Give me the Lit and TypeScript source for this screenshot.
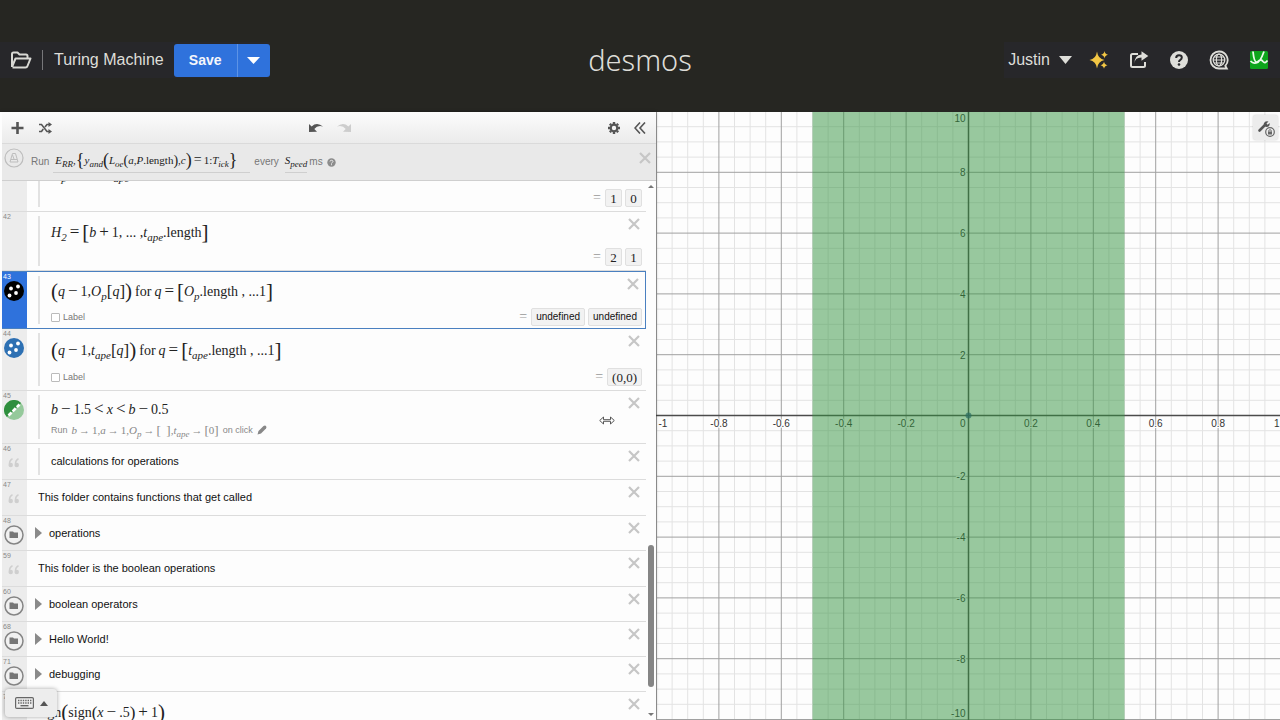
import { LitElement, html, css, svg, nothing, TemplateResult } from "lit";
import { customElement, property } from "lit/decorators.js";
import { classMap } from "lit/directives/class-map.js";

type Part = TemplateResult;

// Small vocabulary for typesetting expressions.
const v = (s: string): Part => html`<i>${s}</i>`;
const n = (s: string): Part => html`<span>${s}</span>`;
const sub = (s: string): Part => html`<sub>${s}</sub>`;
const op = (s: string): Part => html`<span class="op">${s}</span>`;
const word = (s: string): Part => html`<span class="word">${s}</span>`;
const fence = (s: string): Part => html`<span class="fence">${s}</span>`;
const tall = (s: string): Part => html`<span class="tall">${s}</span>`;

const mathStyles = css`
  .math {
    display: inline-flex;
    align-items: baseline;
    font: 14px/20px "Liberation Serif", serif;
    color: #222;
    white-space: pre;
  }
  .math sub {
    font-size: 11px;
    line-height: 0;
    font-style: italic;
    position: relative;
    vertical-align: baseline;
    top: 4px;
  }
  .math .op {
    font-size: 17px;
    line-height: 0;
    margin: 0 3px;
  }
  .math .word {
    margin: 0 3px;
  }
  .math .fence,
  .math .tall {
    position: relative;
    line-height: 0;
  }
  .math .fence {
    font-size: 17px;
    top: 1px;
  }
  .math .tall {
    font-size: 21px;
    top: 2px;
  }
  .math.small {
    font-size: 11px;
  }
  .math.small sub {
    font-size: 9px;
    top: 3px;
  }
  .math.small .op {
    font-size: 14px;
    margin: 0 2px;
  }
  .math.small .fence {
    font-size: 14px;
  }
  .math.small .tall {
    font-size: 18px;
  }
  .math.action {
    font-size: 11px;
    line-height: 14px;
    color: #888;
  }
  .math.action sub {
    font-size: 9px;
    top: 3px;
  }
  .math.action .op {
    font-size: 11px;
    margin: 0 2px;
  }
  .math.action .fence {
    font-size: 13px;
  }
`;

const resetStyles = css`
  button {
    border: 0;
    padding: 0;
    margin: 0;
    background: none;
    font: inherit;
    color: inherit;
    display: inline-flex;
    align-items: center;
    justify-content: center;
    cursor: pointer;
  }
  svg {
    display: block;
  }
`;

const crossIcon = html`<svg width="12" height="12" viewBox="0 0 12 12">
  <path d="M1 1 11 11M11 1 1 11" stroke="#c6c6c6" stroke-width="2.2" />
</svg>`;

@customElement("calc-header")
export class CalcHeader extends LitElement {
  static styles = [
    resetStyles,
    css`
      :host {
        display: grid;
        grid-template-columns: 1fr auto 1fr;
        align-items: center;
        height: 112px;
        padding-top: 8px;
        box-sizing: border-box;
        background: #262622;
        color: #deded9;
        font: 16px/20px "Liberation Sans", Arial, sans-serif;
      }
      .left,
      .right {
        display: flex;
        align-items: center;
        height: 36px;
      }
      .left {
        justify-self: start;
        background: #27272a;
        padding-left: 10px;
      }
      .bar {
        width: 1px;
        height: 20px;
        background: #77777a;
        margin: 0 11px 0 10px;
      }
      .save {
        display: flex;
        height: 33px;
        margin-left: 10px;
        border-radius: 3px;
        background: #2f72dc;
        color: #f4f6fb;
        font-size: 14px;
        font-weight: bold;
        overflow: hidden;
      }
      .save .main {
        width: 63px;
      }
      .save .more {
        width: 33px;
        border-left: 1px solid #5d93e6;
      }
      .brand {
        font: 300 29px/36px "Noto Sans", "Open Sans", sans-serif;
        color: #deddd8;
      }
      .right {
        justify-self: end;
        background: #27272a;
        padding: 0 11px 0 4px;
      }
      .user {
        gap: 9px;
        margin-right: 17px;
      }
      .icons {
        display: flex;
        gap: 20px;
      }
    `,
  ];

  render() {
    return html`
      <div class="left">
        <button aria-label="Open graph">
          <svg width="22" height="18" viewBox="0 0 22 18" fill="none" stroke="#d9d9d4" stroke-width="2" stroke-linejoin="round">
            <path d="M2 16V3Q2 1.500 3.500 1.500H7.500L9.500 3.500H16Q17.500 3.500 17.500 5V7M2 16 5.500 7.500H20.500L17.500 15Q17 16.500 15.500 16.500H2.500" />
          </svg>
        </button>
        <span class="bar"></span>
        <span>Turing Machine</span>
        <div class="save">
          <button class="main">Save</button>
          <button class="more" aria-label="Save options">
            <svg width="13" height="7" viewBox="0 0 13 7"><path d="M0 0H13L6.500 7Z" fill="#fff" /></svg>
          </button>
        </div>
      </div>
      <div class="brand">desmos</div>
      <div class="right">
        <button class="user">
          Justin
          <svg width="13" height="8" viewBox="0 0 13 8"><path d="M0 0H13L6.500 8Z" fill="#deded9" /></svg>
        </button>
        <div class="icons">
          <button aria-label="What's new">
            <svg width="20" height="20" viewBox="0 0 20 20" fill="#f2c644">
              <path d="M8 1.500Q9 9 15.500 10Q9 11 8 18.500Q7 11 .500 10Q7 9 8 1.500Z" />
              <path d="M15.500 1Q16 4.200 19 4.700Q16 5.200 15.500 8.400Q15 5.200 12 4.700Q15 4.200 15.500 1Z" />
              <path d="M15 11.600Q15.500 14.700 18.500 15.200Q15.500 15.700 15 18.800Q14.500 15.700 11.500 15.200Q14.500 14.700 15 11.600Z" />
            </svg>
          </button>
          <button aria-label="Share">
            <svg width="20" height="20" viewBox="0 0 20 20" fill="none" stroke="#deded9" stroke-width="2">
              <path d="M9 4H3.500Q2 4 2 5.500V15.500Q2 17 3.500 17H14.500Q16 17 16 15.500V12" />
              <path d="M5.500 13.500Q5.500 7.500 12.500 7.500V10.800L19.300 6 12.500 1.200V4.500Q5.500 5 5.500 13.500Z" fill="#deded9" stroke="none" />
            </svg>
          </button>
          <button aria-label="Help">
            <svg width="20" height="20" viewBox="0 0 20 20">
              <circle cx="10" cy="10" r="9" fill="#deded9" />
              <path d="M7.200 8Q7.200 5.300 10 5.300Q12.800 5.300 12.800 7.600Q12.800 9 11.400 9.800Q10 10.600 10 12" fill="none" stroke="#27272a" stroke-width="2" />
              <circle cx="10" cy="14.500" r="1.300" fill="#27272a" />
            </svg>
          </button>
          <button aria-label="Language">
            <svg width="20" height="20" viewBox="0 0 20 20" fill="none" stroke="#deded9">
              <path d="M10 1.500A8.500 8.500 0 1 0 10 18.500H17.800L16.300 15.800A8.500 8.500 0 0 0 10 1.500Z" stroke-width="1.800" />
              <circle cx="10" cy="10" r="5.800" stroke-width="1.300" />
              <ellipse cx="10" cy="10" rx="2.600" ry="5.800" stroke-width="1.200" />
              <path d="M4.200 10H15.800M5 7H15M5 13H15" stroke-width="1.200" />
            </svg>
          </button>
          <button aria-label="Desmos apps">
            <svg width="20" height="20" viewBox="0 0 20 20">
              <rect x="1" y="1" width="18" height="18" rx="1.500" fill="#0da51c" />
              <path d="M4 1.500Q5 12.500 8 12.500Q11 12.500 15 1.500M1.500 11Q5 15 9 11.500Q12 8.500 14 11.500Q16 14 18.500 10.500" fill="none" stroke="#eafbe9" stroke-width="1.800" />
            </svg>
          </button>
        </div>
      </div>
    `;
  }
}

interface Row {
  id: string;
  kind: "result" | "point" | "clickable" | "note" | "folder" | "plain";
  member?: boolean;
  selected?: boolean;
  icon?: "black" | "blue" | "green";
  math?: Part;
  text?: string;
  values?: string[];
  valueFont?: "serif" | "sans";
}

const rows: Row[] = [
  {
    id: "41", kind: "result", member: true, values: ["1", "0"],
    math: html`${v("O")}${sub("p")}${fence("[")}${n(" ")}${v("q")}${fence("]")}${n(", ... ")}${v("t")}${sub("ape")}${n(".length")}`,
  },
  {
    id: "42", kind: "result", member: true, values: ["2", "1"],
    math: html`${v("H")}<sub>2</sub>${op("=")}${tall("[")}${v("b")}${op("+")}${n("1, ... ,")}${v("t")}${sub("ape")}${n(".length")}${tall("]")}`,
  },
  {
    id: "43", kind: "point", member: true, selected: true, icon: "black", values: ["undefined", "undefined"], valueFont: "sans",
    math: html`${tall("(")}${v("q")}${op("−")}${n("1,")}${v("O")}${sub("p")}${fence("[")}${v("q")}${fence("]")}${tall(")")}${word("for")}${v("q")}${op("=")}${tall("[")}${v("O")}${sub("p")}${n(".length , ...1")}${tall("]")}`,
  },
  {
    id: "44", kind: "point", member: true, icon: "blue", values: ["(0,0)"],
    math: html`${tall("(")}${v("q")}${op("−")}${n("1,")}${v("t")}${sub("ape")}${fence("[")}${v("q")}${fence("]")}${tall(")")}${word("for")}${v("q")}${op("=")}${tall("[")}${v("t")}${sub("ape")}${n(".length , ...1")}${tall("]")}`,
  },
  {
    id: "45", kind: "clickable", member: true, icon: "green",
    math: html`${v("b")}${op("−")}${n("1.5")}${op("<")}${v("x")}${op("<")}${v("b")}${op("−")}${n("0.5")}`,
  },
  { id: "46", kind: "note", member: true, text: "calculations for operations" },
  { id: "47", kind: "note", text: "This folder contains functions that get called" },
  { id: "48", kind: "folder", text: "operations" },
  { id: "59", kind: "note", text: "This folder is the boolean operations" },
  { id: "60", kind: "folder", text: "boolean operators" },
  { id: "68", kind: "folder", text: "Hello World!" },
  { id: "71", kind: "folder", text: "debugging" },
  {
    id: "73", kind: "plain",
    math: html`${n("sign")}${tall("(")}${n("sign")}${fence("(")}${v("x")}${op("−")}${n(".5")}${fence(")")}${op("+")}${n("1")}${tall(")")}`,
  },
];

@customElement("expression-row")
export class ExpressionRow extends LitElement {
  @property({ attribute: false }) row!: Row;

  static styles = [
    resetStyles,
    mathStyles,
    css`
      :host {
        display: block;
        font: 11px/16px "Liberation Sans", Arial, sans-serif;
        color: #222;
      }
      .row {
        position: relative;
        display: grid;
        grid-template-columns: 25px 1fr;
        box-sizing: border-box;
        background: #fdfdfd;
        border-bottom: 1px solid #dcdcdc;
      }
      .result {
        min-height: 59px;
      }
      .point {
        min-height: 62px;
      }
      .clickable {
        min-height: 53px;
      }
      .note {
        min-height: 36px;
      }
      .folder {
        min-height: 35px;
      }
      .plain {
        min-height: 60px;
      }
      .selected {
        min-height: 58px;
        border: 1px solid #4a80c0;
        border-left: 0;
      }
      .gutter {
        background: #ececec;
        display: flex;
        flex-direction: column;
        align-items: center;
        padding-right: 2px;
      }
      .selected .gutter {
        background: #2f72dc;
      }
      .num {
        align-self: flex-start;
        font-size: 7px;
        line-height: 9px;
        padding-left: 1px;
        color: #888;
      }
      .selected .num {
        color: #fff;
      }
      .body {
        display: flex;
        min-width: 0;
        padding-left: 11px;
      }
      .rule {
        flex: none;
        width: 2px;
        margin: 4px 11px 4px 0;
        background: #e2e2e2;
      }
      .content {
        flex: 1;
        min-width: 0;
        display: flex;
        flex-direction: column;
        justify-content: space-between;
      }
      .top {
        display: flex;
        justify-content: space-between;
        align-items: flex-start;
        padding-right: 6px;
      }
      .top .math {
        padding-top: 11px;
      }
      .point .top .math {
        padding-top: 12px;
      }
      .selected .top .math {
        padding-top: 10px;
      }
      .clickable .top .math {
        padding-top: 9px;
      }
      .top .text {
        padding-top: 9px;
        color: #111;
      }
      .remove {
        margin-top: 6px;
      }
      .bottom {
        display: flex;
        align-items: center;
        padding: 0 4px 4px 0;
      }
      .selected .bottom {
        padding: 0 3px 2px 0;
      }
      .label {
        display: flex;
        align-items: center;
        gap: 3px;
        font-size: 9px;
        line-height: 12px;
        color: #777;
      }
      .label input {
        appearance: none;
        width: 9px;
        height: 9px;
        margin: 0;
        border: 1px solid #bbb;
        border-radius: 1px;
        background: #fff;
      }
      .values {
        display: flex;
        align-items: center;
        gap: 3px;
        margin-left: auto;
        color: #999;
      }
      .values .eq {
        margin-right: 1px;
        font: 14px/14px "Liberation Serif", serif;
      }
      output {
        box-sizing: border-box;
        min-width: 17px;
        height: 18px;
        padding: 0 4px;
        text-align: center;
        border: 1px solid #e0e0e0;
        border-radius: 2px;
        background: #f2f2f2;
        color: #222;
        font: 13px/17px "Liberation Serif", serif;
      }
      output.sans {
        font: 10px/16px "Liberation Sans", Arial, sans-serif;
        color: #111;
      }
      .run {
        display: flex;
        align-items: center;
        gap: 4px;
        font-size: 9px;
        line-height: 14px;
        color: #888;
        padding-bottom: 6px;
      }
      .cursor {
        position: absolute;
        right: 31px;
        bottom: 18px;
      }
      .arrow {
        margin: 0 7px 0 -3px;
      }
      .quote {
        margin-top: 5px;
      }
    `,
  ];

  private gutterIcon(r: Row) {
    if (r.kind === "folder") {
      return html`<button aria-label="Folder">
        <svg width="20" height="20" viewBox="0 0 20 20">
          <circle cx="10" cy="10" r="9" fill="#f1f1f1" stroke="#858585" stroke-width="1.500" />
          <path d="M5.500 6.500H9L10 7.500H14V13H5.500Z" fill="#777" />
        </svg>
      </button>`;
    }
    if (r.kind === "note") {
      return html`<svg class="quote" width="12" height="10" viewBox="0 0 12 10" fill="none" stroke="#cfcfcf" stroke-width="1.500">
        <path d="M4.500 .800Q1.500 2 1.500 6" /><circle cx="2.700" cy="7" r="1.500" fill="#cfcfcf" />
        <path d="M10.500 .800Q7.500 2 7.500 6" /><circle cx="8.700" cy="7" r="1.500" fill="#cfcfcf" />
      </svg>`;
    }
    if (r.icon === "green") {
      return html`<button aria-label="Inequality style">
        <svg width="20" height="20" viewBox="0 0 20 20">
          <circle cx="10" cy="10" r="10" fill="#95c99b" />
          <path d="M17.100 2.900A10 10 0 0 0 2.900 17.100Z" fill="#2f8f3e" />
          <path d="M4.500 15.500 15.500 4.500" stroke="#fff" stroke-width="2.600" stroke-dasharray="4.300 1.600" />
        </svg>
      </button>`;
    }
    if (r.icon) {
      return html`<button aria-label="Point style">
        <svg width="20" height="20" viewBox="0 0 20 20" fill="#fff">
          <circle cx="10" cy="10" r="10" fill=${r.icon === "black" ? "#000" : "#2d70b3"} />
          <circle cx="7" cy="7.500" r="1.900" /><circle cx="14" cy="5.500" r="1.900" />
          <circle cx="12" cy="12" r="1.900" /><circle cx="5.500" cy="14.500" r="1.900" />
        </svg>
      </button>`;
    }
    return nothing;
  }

  private bottom(r: Row) {
    if (r.kind === "clickable") {
      return html`<div class="run">
        <span>Run</span>
        <span class="math action">${v("b")}${op("→")}${n("1,")}${v("a")}${op("→")}${n("1,")}${v("O")}${sub("p")}${op("→")}${fence("[")}${n("  ")}${fence("]")}${n(",")}${v("t")}${sub("ape")}${op("→")}${fence("[")}${n("0")}${fence("]")}</span>
        <span>on click</span>
        <button aria-label="Edit action">
          <svg width="10" height="10" viewBox="0 0 10 10"><path d="M.500 9.500 1.500 6 6.500 1Q8 0 9 1Q10 2 9 3.500L4 8.500Z" fill="#888" /></svg>
        </button>
      </div>`;
    }
    if (!r.values) return nothing;
    return html`<div class="bottom">
      ${r.kind === "point"
        ? html`<label class="label"><input type="checkbox" />Label</label>`
        : nothing}
      <span class="values">
        <span class="eq">=</span>
        ${r.values.map((x) => html`<output class=${classMap({ sans: r.valueFont === "sans" })}>${x}</output>`)}
      </span>
    </div>`;
  }

  render() {
    const r = this.row;
    return html`<div class=${classMap({ row: true, [r.kind]: true, selected: !!r.selected })}>
      <div class="gutter"><span class="num">${r.id}</span>${this.gutterIcon(r)}</div>
      <div class="body">
        ${r.member ? html`<span class="rule"></span>` : nothing}
        ${r.kind === "folder"
          ? html`<button class="arrow" aria-label="Expand folder">
              <svg width="7" height="12" viewBox="0 0 7 12"><path d="M0 0 7 6 0 12Z" fill="#8a8a8a" /></svg>
            </button>`
          : nothing}
        <div class="content">
          <div class="top">
            ${r.math ? html`<span class="math">${r.math}</span>` : html`<span class="text">${r.text}</span>`}
            <button class="remove" aria-label="Delete expression">${crossIcon}</button>
          </div>
          ${this.bottom(r)}
        </div>
      </div>
      ${r.kind === "clickable"
        ? html`<svg class="cursor" width="16" height="9" viewBox="0 0 16 9" fill="#fff" stroke="#555" stroke-width="1">
            <path d="M.700 4.500 4.500 1V3.700H11.500V1L15.300 4.500 11.500 8V5.300H4.500V8Z" />
          </svg>`
        : nothing}
    </div>`;
  }
}

@customElement("expression-panel")
export class ExpressionPanel extends LitElement {
  static styles = [
    resetStyles,
    mathStyles,
    css`
      :host {
        position: relative;
        z-index: 1;
        display: flex;
        flex-direction: column;
        min-height: 0;
        padding-left: 2px;
        background: #fdfdfd;
        box-shadow: 0 0 3px rgba(0, 0, 0, 0.35);
        font: 10px/14px "Liberation Sans", Arial, sans-serif;
        color: #777;
      }
      .toolbar {
        flex: none;
        display: flex;
        align-items: center;
        justify-content: space-between;
        height: 32px;
        box-sizing: border-box;
        padding: 0 10px 0 9px;
        background: linear-gradient(#fcfcfc, #ebebeb);
        border-bottom: 1px solid #dadada;
      }
      .group {
        display: flex;
        align-items: center;
        gap: 14px;
      }
      .ticker {
        flex: none;
        display: flex;
        align-items: center;
        height: 37px;
        box-sizing: border-box;
        padding: 0 5px 5px 2px;
        background: #e9e9e9;
        border-bottom: 1px solid #cfcfcf;
      }
      .metronome {
        margin: 0 7px 4px 0;
      }
      .run,
      .every,
      .unit {
        padding-top: 5px;
      }
      .field {
        border-bottom: 1px solid #cfcfcf;
        padding: 4px 0 2px;
      }
      .target {
        min-width: 197px;
        margin: 0 4px 0 4px;
        box-sizing: border-box;
        padding-left: 2px;
      }
      .speed {
        margin: 0 2px 0 6px;
      }
      .help {
        margin: 5px 0 0 4px;
      }
      .close {
        margin: 0 0 4px auto;
      }
      .area {
        flex: 1;
        min-height: 0;
        display: grid;
        grid-template-columns: 1fr 10px;
      }
      .list {
        overflow: hidden;
        min-height: 0;
      }
      .track {
        display: flex;
        flex-direction: column;
        align-items: center;
        min-height: 0;
        padding: 4px 0 4px;
      }
      .before {
        flex: 356;
      }
      .thumb {
        flex: 142;
        width: 6px;
        border-radius: 3px;
        background: #858585;
      }
      .after {
        flex: 26;
      }
      .keypad {
        position: absolute;
        left: 5px;
        bottom: 3px;
        width: 52px;
        height: 28px;
        gap: 6px;
        border-radius: 4px;
        background: #ededed;
        box-shadow: 0 0 4px rgba(0, 0, 0, 0.35);
      }
    `,
  ];

  firstUpdated() {
    const list = this.renderRoot.querySelector(".list") as HTMLElement;
    const children = Array.from(list.children) as LitElement[];
    Promise.all(children.map((c) => c.updateComplete)).then(() => {
      list.scrollTop = 28;
    });
  }

  render() {
    return html`
      <div class="toolbar">
        <div class="group">
          <button aria-label="Add item">
            <svg width="13" height="12" viewBox="0 0 13 12"><path d="M6.500 0V12M.500 6H12.500" stroke="#555" stroke-width="2.600" /></svg>
          </button>
          <button aria-label="Shuffle">
            <svg width="14" height="12" viewBox="0 0 14 12" fill="none" stroke="#555" stroke-width="1.600">
              <path d="M1 2.500H3.500L9 9.500H11M1 9.500H3.500L5.300 7M7 5 9 2.500H11" />
              <path d="M10.500 0 14 2.500 10.500 5ZM10.500 7 14 9.500 10.500 12Z" fill="#555" stroke="none" />
            </svg>
          </button>
        </div>
        <div class="group">
          <button aria-label="Undo">
            <svg width="14" height="10" viewBox="0 0 14 10"><path d="M0 9V1L2.600 3.400Q8-1.500 14 3.500Q8.500 1.800 5.300 6L8 8.700Z" fill="#555" /></svg>
          </button>
          <button aria-label="Redo">
            <svg width="14" height="10" viewBox="0 0 14 10"><path d="M14 9V1L11.400 3.400Q6-1.500 0 3.500Q5.500 1.800 8.700 6L6 8.700Z" fill="#cdcdcd" /></svg>
          </button>
        </div>
        <div class="group">
          <button aria-label="Edit list">
            <svg width="12" height="12" viewBox="0 0 12 12" fill="none" stroke="#555">
              <circle cx="6" cy="6" r="3.300" stroke-width="2.200" />
              <path d="M6 0V2M6 10V12M0 6H2M10 6H12M1.800 1.800 3.200 3.200M8.800 8.800 10.200 10.200M10.200 1.800 8.800 3.200M3.200 8.800 1.800 10.200" stroke-width="2.400" />
            </svg>
          </button>
          <button aria-label="Hide list">
            <svg width="12" height="12" viewBox="0 0 12 12" fill="none" stroke="#555" stroke-width="1.600"><path d="M6 .500 1 6 6 11.500M11 .500 6 6 11 11.500" /></svg>
          </button>
        </div>
      </div>
      <div class="ticker">
        <button class="metronome" aria-label="Play ticker">
          <svg width="20" height="20" viewBox="0 0 20 20" fill="none" stroke="#bdbdbd">
            <circle cx="10" cy="10" r="9" stroke-width="1.200" />
            <path d="M8.500 5.500H11.500L14 14H6ZM7 11.500H13M10 11 8.500 7" />
          </svg>
        </button>
        <span class="run">Run</span>
        <span class="field target"><span class="math small">${v("E")}${sub("RR")}${n(",")}${tall("{")}${v("y")}${sub("and")}${tall("(")}${v("L")}${sub("oe")}${fence("(")}${v("a")}${n(",")}${v("P")}${n(".length")}${fence(")")}${n(",")}${v("c")}${tall(")")}${op("=")}${n("1:")}${v("T")}${sub("ick")}${tall("}")}</span></span>
        <span class="every">every</span>
        <span class="field speed"><span class="math small">${v("S")}${sub("peed")}</span></span>
        <span class="unit">ms</span>
        <button class="help" aria-label="Ticker help">
          <svg width="9" height="9" viewBox="0 0 9 9">
            <circle cx="4.500" cy="4.500" r="4.200" fill="#8c8c8c" />
            <path d="M3 3.500Q3 2.300 4.500 2.300Q6 2.300 6 3.500Q6 4.200 4.500 5V5.500M4.500 6.200V7.200" fill="none" stroke="#e9e9e9" />
          </svg>
        </button>
        <button class="close" aria-label="Remove ticker">${crossIcon}</button>
      </div>
      <div class="area">
        <div class="list">
          ${rows.map((r) => html`<expression-row .row=${r}></expression-row>`)}
        </div>
        <div class="track">
          <svg width="6" height="3" viewBox="0 0 6 3"><path d="M0 3 3 0 6 3Z" fill="#777" /></svg>
          <span class="before"></span>
          <span class="thumb"></span>
          <span class="after"></span>
          <svg width="6" height="3" viewBox="0 0 6 3"><path d="M0 0H6L3 3Z" fill="#777" /></svg>
        </div>
      </div>
      <button class="keypad" aria-label="Show keypad">
        <svg width="19" height="12" viewBox="0 0 19 12" fill="none" stroke="#666">
          <rect x=".600" y=".600" width="17.800" height="10.800" rx="1.200" stroke-width="1.200" />
          <path d="M3 3.500H16.500M3 6H16.500" stroke-width="1.400" stroke-dasharray="1.400 1" />
          <path d="M5.500 8.700H13.500" stroke-width="1.400" />
        </svg>
        <svg width="8" height="5" viewBox="0 0 8 5"><path d="M0 5 4 0 8 5Z" fill="#555" /></svg>
      </button>
    `;
  }
}

const STEP_X = 62.4;
const STEP_Y = 60.8;

@customElement("graph-paper")
export class GraphPaper extends LitElement {
  static styles = [
    resetStyles,
    css`
      :host {
        position: relative;
        display: block;
        min-width: 0;
        min-height: 0;
        background: #fdfdfd;
        overflow: hidden;
      }
      .plot {
        width: 100%;
        height: 100%;
      }
      .minor {
        stroke: #e3e3e3;
        stroke-width: 1;
      }
      .major {
        stroke: #a0a0a0;
        stroke-width: 1;
      }
      .axis {
        stroke: #4c4c4c;
        stroke-width: 1.5;
      }
      .tick {
        font: 10px "Liberation Sans", Arial, sans-serif;
        fill: #333;
        stroke: #fdfdfd;
        stroke-width: 2;
        paint-order: stroke;
      }
      .region {
        fill: #339340;
        fill-opacity: 0.5;
      }
      .settings {
        position: absolute;
        top: 3px;
        right: 2px;
        width: 25px;
        height: 25px;
        border-radius: 3px;
        background: #ececec;
        box-shadow: 0 0 2px rgba(0, 0, 0, 0.2);
      }
    `,
  ];

  render() {
    const lines = (step: number, count: number, cls: string, vertical: boolean, skip: number) =>
      Array.from({ length: count * 2 + 1 }, (_, i) => i - count)
        .filter((k) => k % skip !== 0 || skip === 1)
        .map((k) => {
          const p = k * step;
          return vertical
            ? svg`<line class=${cls} x1=${p} x2=${p} y1="-400" y2="400" />`
            : svg`<line class=${cls} x1="-400" x2="400" y1=${p} y2=${p} />`;
        });
    const ks = [-4, -3, -2, -1, 1, 2, 3, 4];
    return html`
      <svg class="plot" viewBox="-312.5 -303.5 624 608" preserveAspectRatio="xMidYMid slice">
        ${lines(STEP_X / 4, 24, "minor", true, 4)}
        ${lines(STEP_Y / 4, 24, "minor", false, 4)}
        ${lines(STEP_X, 6, "major", true, 1)}
        ${lines(STEP_Y, 6, "major", false, 1)}
        <line class="axis" x1="-400" x2="400" y1="0" y2="0" />
        <line class="axis" x1="0" x2="0" y1="-400" y2="400" />
        ${ks.map((k) => svg`<text class="tick" text-anchor="middle" x=${k * STEP_X} y="11">${(k * 0.2).toFixed(1)}</text>`)}
        <text class="tick" x="-310" y="11">-1</text>
        <text class="tick" text-anchor="end" x="311" y="11">1</text>
        <text class="tick" text-anchor="end" x="-3" y="11">0</text>
        ${ks.map((k) => svg`<text class="tick" text-anchor="end" x="-3" y=${4 - k * STEP_Y}>${k * 2}</text>`)}
        <text class="tick" text-anchor="end" x="-3" y="-294">10</text>
        <text class="tick" text-anchor="end" x="-3" y="301">-10</text>
        <rect class="region" x=${-2.5 * STEP_X} y="-400" width=${5 * STEP_X} height="800" />
        <circle cx="0" cy="0" r="3" fill="#2c6e63" fill-opacity="0.700" />
      </svg>
      <button class="settings" aria-label="Graph settings">
        <svg width="19" height="19" viewBox="0 0 19 19">
          <path d="M3.500 12.500 9 7" stroke="#555" stroke-width="2.600" stroke-linecap="round" />
          <path d="M12.500 3.500 10.500 5.500 11.500 6.700 13.700 5Q14 9 10.500 9Q7.500 8.500 7.800 5.500Q9 2.500 12.500 3.500Z" fill="#555" />
          <circle cx="14" cy="14" r="4.300" fill="#ececec" stroke="#666" stroke-width="1.200" />
          <rect x="12" y="13.500" width="4" height="3" fill="#666" />
          <path d="M12.700 13.500V12.500Q14 10.700 15.300 12.500V13.500" fill="none" stroke="#666" />
        </svg>
      </button>
    `;
  }
}

@customElement("app-root")
export class AppRoot extends LitElement {
  static styles = css`
    :host {
      display: grid;
      grid-template-rows: auto minmax(0, 1fr);
      height: 100vh;
      overflow: hidden;
    }
    .workspace {
      display: grid;
      grid-template-columns: 41fr 39fr;
      grid-template-rows: minmax(0, 1fr);
      min-height: 0;
    }
  `;

  render() {
    return html`
      <calc-header></calc-header>
      <div class="workspace">
        <expression-panel></expression-panel>
        <graph-paper></graph-paper>
      </div>
    `;
  }
}
